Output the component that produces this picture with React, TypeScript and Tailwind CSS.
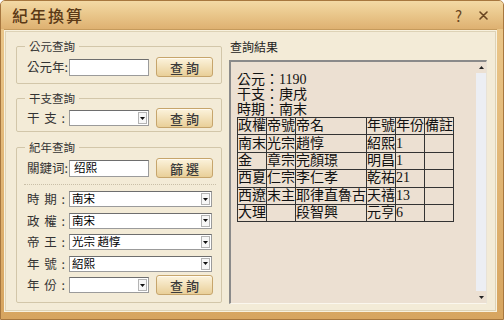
import React from 'react';

const UI_FONT = "font-['Noto_Sans_CJK_TC','Noto_Sans_CJK_SC',sans-serif]";

const ROWS: string[][] = [
  ['南末', '光宗', '趙惇', '紹熙', '1', ''],
  ['金', '章宗', '完顏璟', '明昌', '1', ''],
  ['西夏', '仁宗', '李仁孝', '乾祐', '21', ''],
  ['西遼', '末主', '耶律直魯古', '天禧', '13', ''],
  ['大理', '', '段智興', '元亨', '6', ''],
];

const COL_W = ['w-[28px]', 'w-[28px]', 'w-[70px]', 'w-[28px]', 'w-[28px]', 'w-[28px]'];

const SpacedLabel = ({ a, b }: { a: string; b: string }) => (
  <div className="flex w-[40px] shrink-0 justify-between pr-[2px] text-[12.5px] leading-[16px] text-[#333]">
    <span>{a}</span>
    <span>{b}</span>
    <span>:</span>
  </div>
);

const Button = ({ text }: { text: string }) => (
  <button className="flex h-[20px] w-[57px] shrink-0 items-center justify-center rounded-[3px] border border-[#c6a56c] bg-gradient-to-b from-[#fcf3dc] to-[#e9cf98] pl-[3px] text-[13px] font-medium leading-none tracking-[3px] text-[#3a3a3a] shadow-[inset_0_1px_0_#fffaf0]">
    {text}
  </button>
);

const TextBox = ({ value = '', w = 'w-[80px]' }: { value?: string; w?: string }) => (
  <div className={`${w} flex h-[17px] shrink-0 items-center border border-[#9b9b9b] border-t-[#6e6e6e] bg-white pl-[4px] text-[11.5px] leading-none text-black`}>
    {value}
  </div>
);

const Select = ({ value = '', w = 'w-[143px]' }: { value?: string; w?: string }) => (
  <div className={`${w} flex h-[16px] shrink-0 items-center border border-[#9b9b9b] border-t-[#6e6e6e] bg-white text-[11.5px] leading-none text-black`}>
    <span className="flex-1 pl-[2px]">{value}</span>
    <span className="mr-[1px] flex h-[12px] w-[9px] items-center justify-center border border-[#b4b4b4] bg-[#f7f7f7]">
      <svg width="5" height="3" viewBox="0 0 5 3">
        <path d="M0 0h5L2.5 3z" fill="#111" />
      </svg>
    </span>
  </div>
);

const Group = ({ title, children, className = '' }: { title: string; children: React.ReactNode; className?: string }) => (
  <fieldset className={`rounded-[2px] border border-[#d2c6a9] pl-[10px] pr-[8px] pt-[4px] ${className}`}>
    <legend className="ml-[-2px] px-[4px] text-[11.5px] leading-[14px] text-[#333]">{title}</legend>
    {children}
  </fieldset>
);

export default function App() {
  return (
    <div className={`flex h-[320px] w-[504px] flex-col overflow-hidden rounded-t-[5px] border border-[#a7773f] bg-gradient-to-b from-[#ecc98d] to-[#d7a560] ${UI_FONT}`}>
      {/* Title bar */}
      <div className="flex h-[28px] shrink-0 items-center bg-gradient-to-b from-[#f3d9a5] via-[#e9c68a] to-[#deb171] pl-[11px] pr-[15px]">
        <span className="text-[16px] font-medium tracking-[2px] text-[#5b3916]">紀年換算</span>
        <span className="ml-auto text-[15px] leading-none text-[#6a4520]">?</span>
        <svg className="ml-[17px]" width="9" height="9" viewBox="0 0 9 9">
          <path d="M1 1l7 7M8 1L1 8" stroke="#6a4520" strokeWidth="1.6" strokeLinecap="round" />
        </svg>
      </div>

      {/* Body */}
      <div className="mb-[7px] ml-[3px] mr-[6px] flex flex-1 border-t border-[#c59a5c] bg-[#f8f1de] p-[1px]">
        <div className="flex flex-1 gap-[8px] border border-[#ddd2b6] bg-[#f3ebd7] pb-[6px] pl-[10px] pr-[8px] pt-[7px]">
          {/* Left column */}
          <div className="flex w-[205px] shrink-0 flex-col">
            <Group title="公元查詢" className="pb-[6px]">
              <div className="flex h-[20px] items-center">
                <div className="w-[42px] shrink-0 text-[12.5px] leading-[16px] text-[#333]">公元年:</div>
                <TextBox />
                <div className="ml-[7px]">
                  <Button text="查詢" />
                </div>
              </div>
            </Group>

            <Group title="干支查詢" className="mt-[7px] pb-[4px]">
              <div className="flex h-[18px] items-center">
                <SpacedLabel a="干" b="支" />
                <div className="ml-[2px]">
                  <Select w="w-[80px]" />
                </div>
                <div className="ml-[7px]">
                  <Button text="查詢" />
                </div>
              </div>
            </Group>

            <Group title="紀年查詢" className="mt-[8px] pb-[9px]">
              <div className="flex h-[20px] items-center">
                <div className="w-[42px] shrink-0 text-[12.5px] leading-[16px] text-[#333]">關鍵词:</div>
                <TextBox value="绍熙" />
                <div className="ml-[7px]">
                  <Button text="篩選" />
                </div>
              </div>
              <div className="-mx-[3px] mt-[6px] border-t border-dotted border-[#c9bfa8]" />
              <div className="mt-[6px] flex flex-col gap-[5.6px]">
                <div className="flex h-[16px] items-center">
                  <SpacedLabel a="時" b="期" />
                  <div className="ml-[2px]"><Select value="南宋" /></div>
                </div>
                <div className="flex h-[16px] items-center">
                  <SpacedLabel a="政" b="權" />
                  <div className="ml-[2px]"><Select value="南宋" /></div>
                </div>
                <div className="flex h-[16px] items-center">
                  <SpacedLabel a="帝" b="王" />
                  <div className="ml-[2px]"><Select value="光宗 趙惇" /></div>
                </div>
                <div className="flex h-[16px] items-center">
                  <SpacedLabel a="年" b="號" />
                  <div className="ml-[2px]"><Select value="紹熙" /></div>
                </div>
                <div className="flex h-[16px] items-center">
                  <SpacedLabel a="年" b="份" />
                  <div className="ml-[2px]"><Select w="w-[80px]" /></div>
                  <div className="ml-[7px]">
                    <Button text="查詢" />
                  </div>
                </div>
              </div>
            </Group>
          </div>

          {/* Right column */}
          <div className="flex flex-1 flex-col">
            <div className="pl-[1px] text-[12px] leading-[16px] text-[#222]">查詢結果</div>
            <div className="mt-[5px] flex flex-1 border-b border-l-2 border-r border-t-2 border-b-[#fbf7ee] border-l-[#8a8a8a] border-r-[#e8e2d6] border-t-[#8a8a8a] bg-[#ece0d2]">
              <div className="flex-1 pl-[6px] pt-[10px] font-['Liberation_Serif','Noto_Sans_CJK_TC',serif] text-[14px] leading-[15px] text-[#111]">
                <div>公元：1190</div>
                <div>干支：庚戌</div>
                <div>時期：南末</div>
                <table className="border-collapse border border-[#333]">
                  <tbody>
                    <tr>
                      {['政權', '帝號', '帝名', '年號', '年份', '備註'].map((h, i) => (
                        <td key={i} className={`${COL_W[i]} h-[17.4px] whitespace-nowrap border border-[#333] p-0 align-middle leading-[16px]`}>
                          {h}
                        </td>
                      ))}
                    </tr>
                    {ROWS.map((r, ri) => (
                      <tr key={ri}>
                        {r.map((c, ci) => (
                          <td key={ci} className={`${COL_W[ci]} h-[17.4px] whitespace-nowrap border border-[#333] p-0 align-middle leading-[16px]`}>
                            {c}
                          </td>
                        ))}
                      </tr>
                    ))}
                  </tbody>
                </table>
              </div>
              {/* Scrollbar */}
              <div className="flex w-[10px] shrink-0 flex-col">
                <div className="flex h-[11px] items-center justify-center">
                  <svg width="5" height="3" viewBox="0 0 5 3">
                    <path d="M0 3h5L2.5 0z" fill="#222" />
                  </svg>
                </div>
                <div className="flex-1 bg-[#eceef3]" />
                <div className="flex h-[12px] items-center justify-center">
                  <svg width="5" height="3" viewBox="0 0 5 3">
                    <path d="M0 0h5L2.5 3z" fill="#222" />
                  </svg>
                </div>
              </div>
            </div>
          </div>
        </div>
      </div>
    </div>
  );
}
